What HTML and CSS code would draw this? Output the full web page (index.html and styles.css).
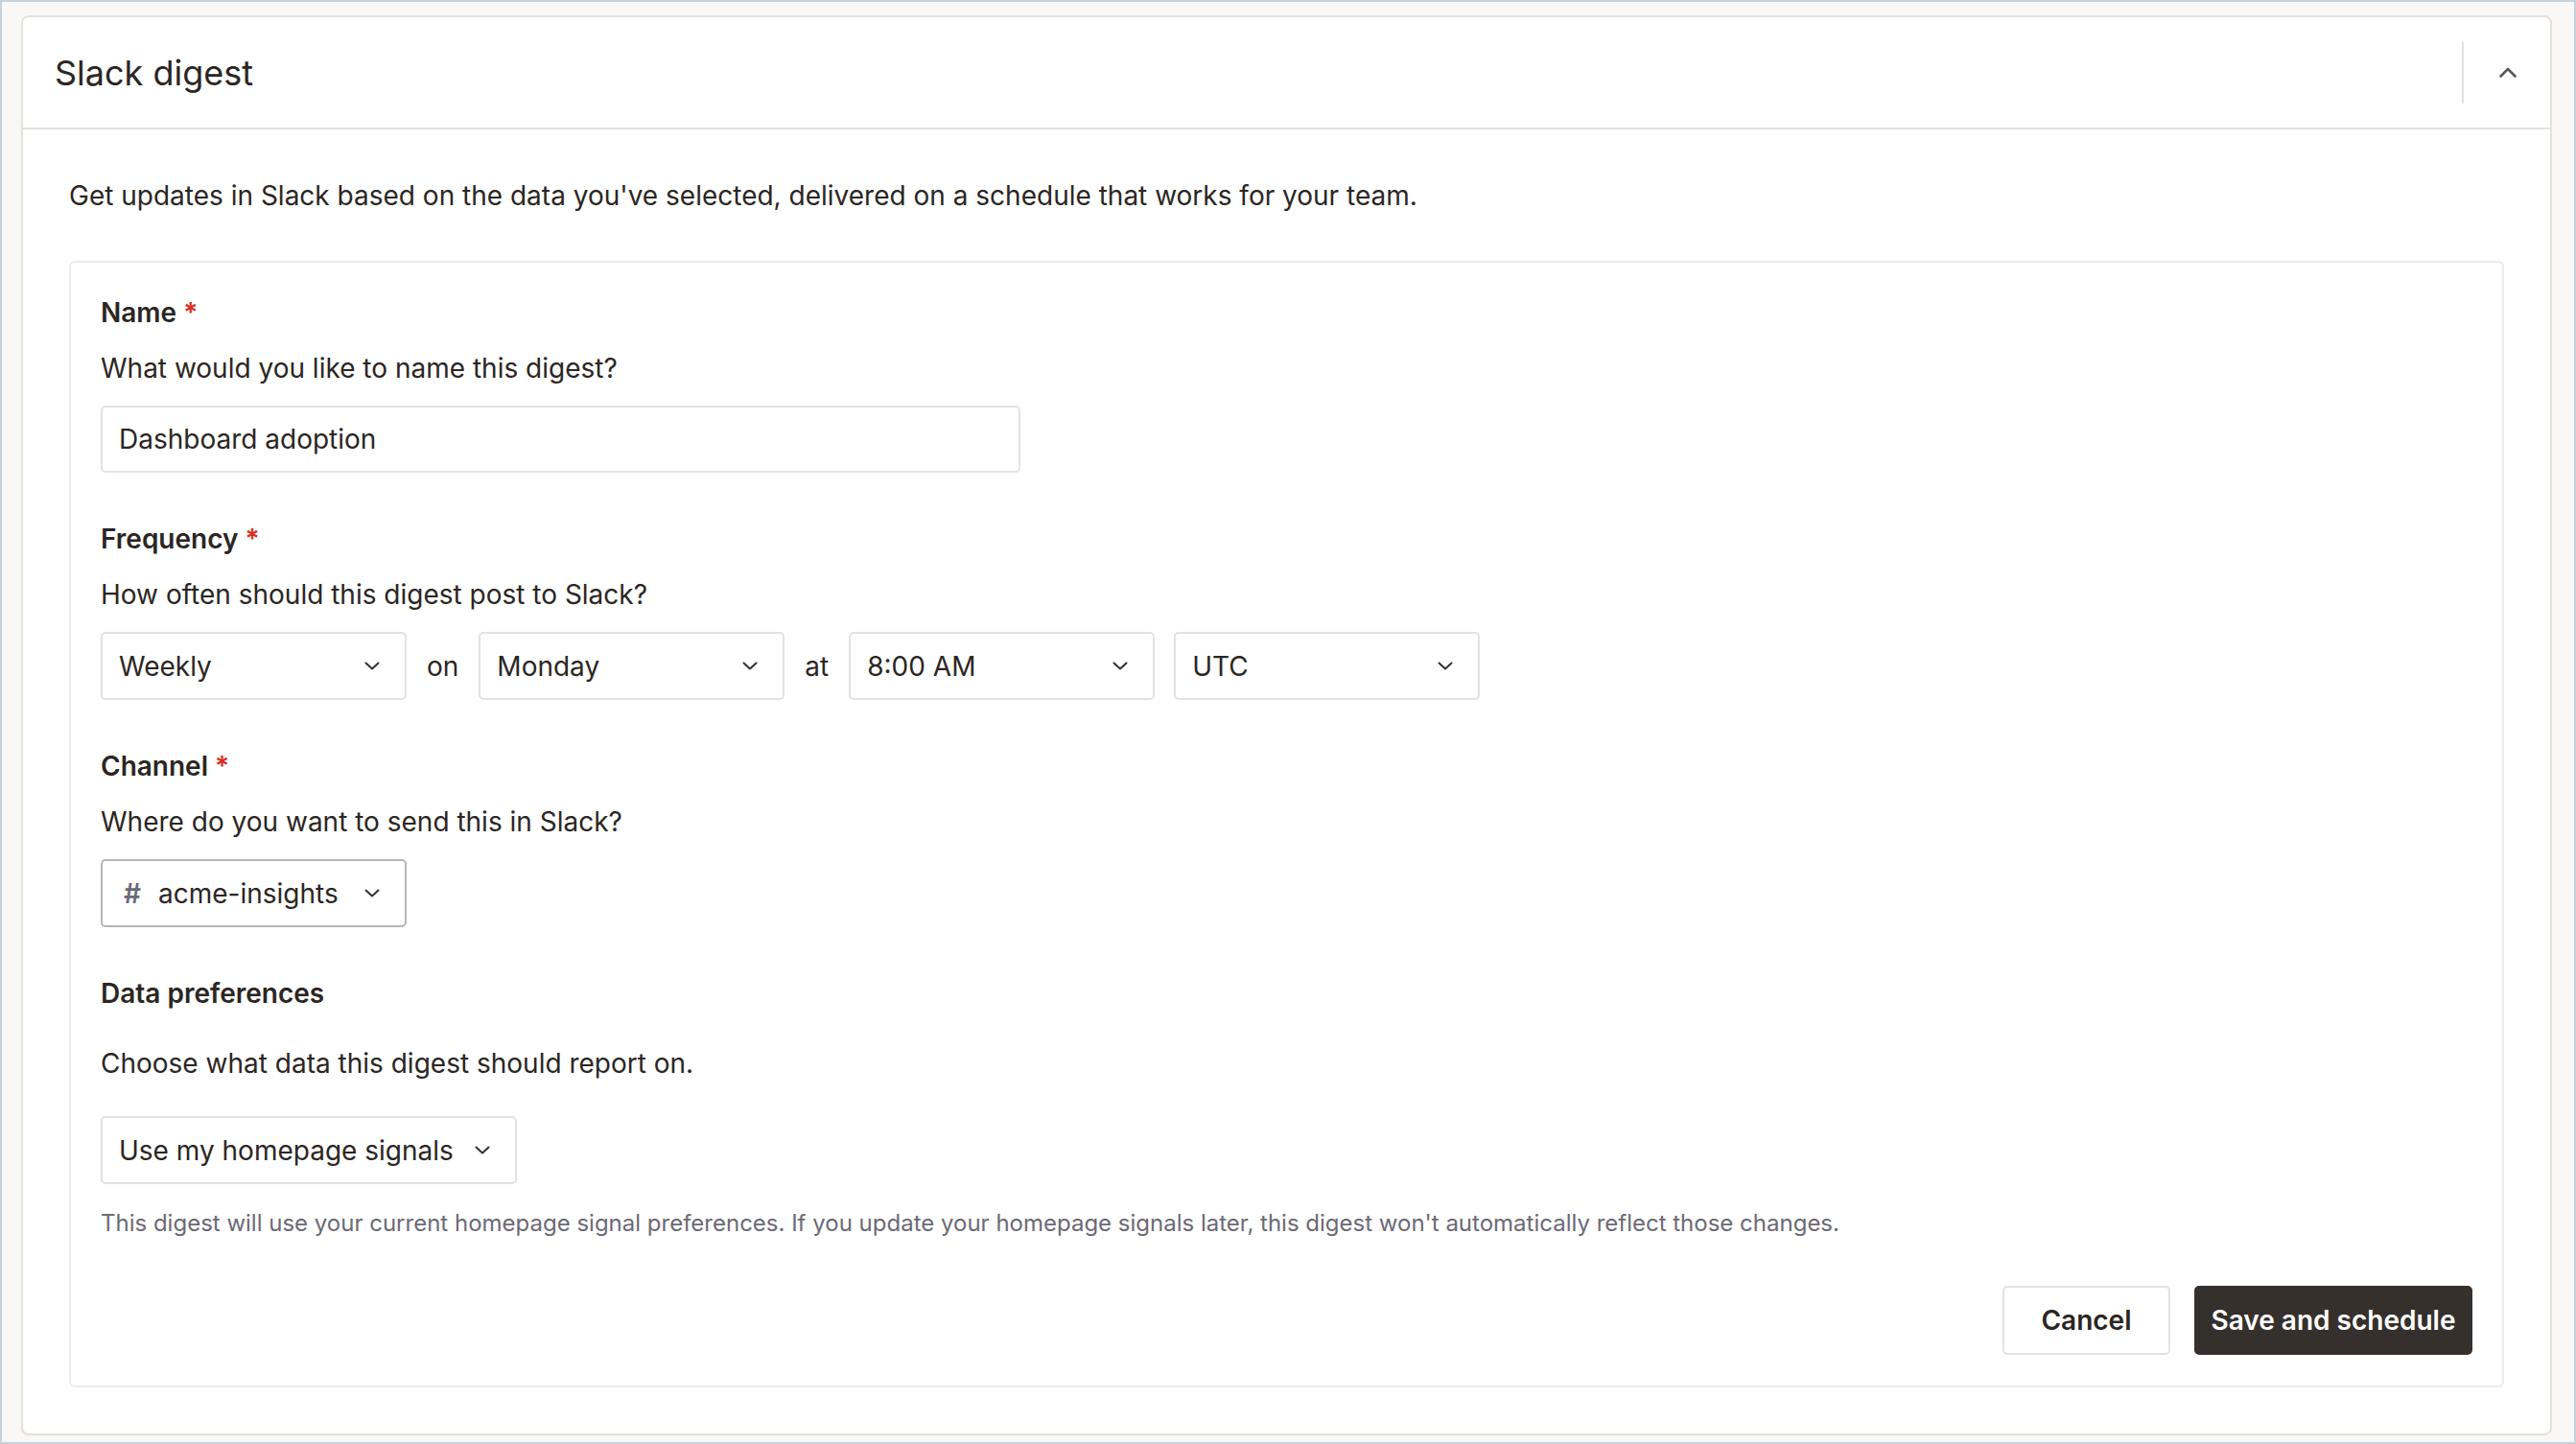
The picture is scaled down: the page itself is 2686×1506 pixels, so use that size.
FILE: index.html
```html
<!DOCTYPE html>
<html lang="en">
<head>
<meta charset="utf-8">
<title>Slack digest</title>
<link rel="stylesheet" href="styles.css">
</head>
<body>
<div class="frame">
  <section class="card">
    <header class="card-header">
      <h1 class="card-title">Slack digest</h1>
      <div class="header-actions">
        <span class="header-divider"></span>
        <button class="collapse-btn" aria-label="Collapse">
          <svg width="18" height="11" viewBox="0 0 18 11"><path d="M1.5 9.5 L9 2 L16.5 9.5" fill="none" stroke="#5c5753" stroke-width="2.6" stroke-linecap="round" stroke-linejoin="round"/></svg>
        </button>
      </div>
    </header>
    <div class="card-body">
      <p class="intro">Get updates in Slack based on the data you've selected, delivered on a schedule that works for your team.</p>
      <div class="form-box">
        <div class="field">
          <div class="label">Name <span class="req">*</span></div>
          <div class="desc">What would you like to name this digest?</div>
          <div class="input">Dashboard adoption</div>
        </div>
        <div class="field">
          <div class="label">Frequency <span class="req">*</span></div>
          <div class="desc">How often should this digest post to Slack?</div>
          <div class="select-row">
            <div class="select"><span>Weekly</span><svg class="chev" width="16" height="9" viewBox="0 0 16 9"><path d="M1.5 1.5 L8 7.5 L14.5 1.5" fill="none" stroke="#36302d" stroke-width="2" stroke-linecap="round" stroke-linejoin="round"/></svg></div>
            <span class="joiner">on</span>
            <div class="select"><span>Monday</span><svg class="chev" width="16" height="9" viewBox="0 0 16 9"><path d="M1.5 1.5 L8 7.5 L14.5 1.5" fill="none" stroke="#36302d" stroke-width="2" stroke-linecap="round" stroke-linejoin="round"/></svg></div>
            <span class="joiner">at</span>
            <div class="select"><span>8:00 AM</span><svg class="chev" width="16" height="9" viewBox="0 0 16 9"><path d="M1.5 1.5 L8 7.5 L14.5 1.5" fill="none" stroke="#36302d" stroke-width="2" stroke-linecap="round" stroke-linejoin="round"/></svg></div>
            <div class="select"><span>UTC</span><svg class="chev" width="16" height="9" viewBox="0 0 16 9"><path d="M1.5 1.5 L8 7.5 L14.5 1.5" fill="none" stroke="#36302d" stroke-width="2" stroke-linecap="round" stroke-linejoin="round"/></svg></div>
          </div>
        </div>
        <div class="field">
          <div class="label">Channel <span class="req">*</span></div>
          <div class="desc">Where do you want to send this in Slack?</div>
          <div class="select select-channel"><span class="channel"><span class="hash">#</span>acme-insights</span><svg class="chev" width="16" height="9" viewBox="0 0 16 9"><path d="M1.5 1.5 L8 7.5 L14.5 1.5" fill="none" stroke="#36302d" stroke-width="2" stroke-linecap="round" stroke-linejoin="round"/></svg></div>
        </div>
        <div class="field field-data">
          <div class="label">Data preferences</div>
          <div class="desc">Choose what data this digest should report on.</div>
          <div class="select select-data"><span>Use my homepage signals</span><svg class="chev" width="16" height="9" viewBox="0 0 16 9"><path d="M1.5 1.5 L8 7.5 L14.5 1.5" fill="none" stroke="#36302d" stroke-width="2" stroke-linecap="round" stroke-linejoin="round"/></svg></div>
          <div class="helper">This digest will use your current homepage signal preferences. If you update your homepage signals later, this digest won't automatically reflect those changes.</div>
        </div>
        <div class="actions">
          <button class="btn btn-secondary">Cancel</button>
          <button class="btn btn-primary">Save and schedule</button>
        </div>
      </div>
    </div>
  </section>
</div>
</body>
</html>
```

FILE: styles.css
```css
* { box-sizing: border-box; }
html, body { margin: 0; padding: 0; }
body {
  background: #c7d2dc;
  font-family: Inter, "Noto Sans", "Liberation Sans", sans-serif;
  color: #2b2623;
  width: 2686px;
  height: 1506px;
  overflow: hidden;
}
.frame {
  margin: 2px;
  height: 1502px;
  background: #f9f8f6;
  padding: 14px 23px 7px 20px;
}
.card {
  background: #ffffff;
  border: 2px solid #e3e2de;
  border-radius: 8px;
  height: 1481px;
  display: flex;
  flex-direction: column;
}
.card-header {
  height: 117px;
  border-bottom: 2px solid #e3e2de;
  display: flex;
  align-items: center;
  justify-content: space-between;
  padding: 0 34px 0 33px;
}
.card-title {
  margin: 0;
  font-size: 36px;
  font-weight: 400;
  color: #2b2623;
}
.header-actions {
  display: flex;
  align-items: center;
  height: 64px;
}
.header-divider {
  width: 2px;
  height: 64px;
  background: #e3e2de;
  margin-right: 36px;
}
.collapse-btn {
  border: 0;
  background: none;
  padding: 0;
  display: flex;
  align-items: center;
  justify-content: center;
  width: 20px;
  height: 20px;
}
.card-body {
  padding: 49px 48px 48px 48px;
  flex: 1;
  display: flex;
  flex-direction: column;
}
.intro {
  margin: 0 0 48px 0;
  font-size: 28px;
  line-height: 40px;
  color: #2b2623;
}
.form-box {
  flex: 1;
  border: 2px solid #ebebf0;
  border-radius: 6px;
  padding: 32px 31px 32px 31px;
  display: flex;
  flex-direction: column;
}
.field { margin-bottom: 49px; }
.label {
  font-size: 28px;
  line-height: 40px;
  font-weight: 600;
  color: #2b2623;
}
.req { color: #d92d20; font-weight: 600; }
.desc {
  font-size: 28px;
  line-height: 40px;
  margin-top: 18px;
  margin-bottom: 19px;
  color: #2b2623;
}
.input {
  width: 959px;
  height: 70px;
  border: 2px solid #e3e2de;
  border-radius: 5px;
  padding: 0 17px;
  display: flex;
  align-items: center;
  font-size: 28px;
}
.select-row {
  display: flex;
  align-items: center;
  gap: 20px;
}
.joiner { font-size: 28px; padding: 0 1px; }
.select {
  width: 319px;
  height: 71px;
  border: 2px solid #e3e2de;
  border-radius: 5px;
  padding: 0 26px 0 17px;
  display: flex;
  align-items: center;
  justify-content: space-between;
  font-size: 28px;
  background: #fff;
}
.chev { flex: none; }
.select-channel { border-color: #b9b6b2; }
.channel { display: flex; align-items: center; }
.hash {
  color: #6a6a76;
  font-weight: 600;
  margin-left: 5px;
  margin-right: 18px;
}
.field-data { margin-bottom: 0; }
.field-data .desc { margin-top: 33px; margin-bottom: 35px; }
.select-data { width: 434px; }
.helper {
  margin-top: 24px;
  font-size: 24px;
  line-height: 34px;
  color: #6c6975;
}
.actions {
  margin-top: auto;
  display: flex;
  justify-content: flex-end;
  gap: 25px;
}
.btn {
  height: 72px;
  border-radius: 5px;
  font-family: inherit;
  font-size: 28px;
  font-weight: 600;
}
.btn-secondary {
  width: 175px;
  background: #fff;
  border: 2px solid #e3e2de;
  color: #2b2623;
}
.btn-primary {
  width: 290px;
  background: #36302d;
  border: 2px solid #36302d;
  color: #ffffff;
}
```
